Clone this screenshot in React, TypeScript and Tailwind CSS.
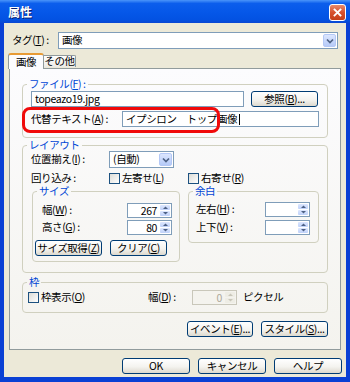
import React from "react";

const Mn: React.FC<{ c: string }> = ({ c }) => (
  <span className="underline underline-offset-[1px] decoration-[0.5px]">{c}</span>
);

const XpButton: React.FC<{ className?: string; children: React.ReactNode }> = ({ className = "", children }) => (
  <div
    className={`h-[16px] flex items-center justify-center rounded-[3px] border border-[#003C74] bg-[linear-gradient(#FFFFFF,#F4F3EF_55%,#DDD9CE)] leading-none text-black ${className}`}
  >
    {children}
  </div>
);

const DropArrow = () => (
  <div className="w-[13px] h-[13px] mr-px rounded-[2px] border border-[#B4C8F6] bg-[linear-gradient(#DCE6FE,#B5CAF8)] flex items-center justify-center">
    <svg width="8" height="6" viewBox="0 0 8 6">
      <path d="M1 1.5 L4 4.5 L7 1.5" stroke="#4D6185" strokeWidth="1.7" fill="none" />
    </svg>
  </div>
);

const Select: React.FC<{ className?: string; value: string }> = ({ className = "", value }) => (
  <div className={`h-[17px] flex items-center border border-[#7F9DB9] bg-white ${className}`}>
    <span className="flex-1 pl-[3px] leading-none">{value}</span>
    <DropArrow />
  </div>
);

const Input: React.FC<{ className?: string; children?: React.ReactNode }> = ({ className = "", children }) => (
  <div className={`h-[16px] flex items-center border border-[#7F9DB9] bg-white pl-[3px] leading-none ${className}`}>
    {children}
  </div>
);

const Check: React.FC<{ label: React.ReactNode; className?: string }> = ({ label, className = "" }) => (
  <div className={`flex items-center ${className}`}>
    <span className="w-[11px] h-[11px] border border-[#1C5180] bg-[linear-gradient(135deg,#DCDCD7,#FFFFFF)] mr-[2px]" />
    <span className="leading-none">{label}</span>
  </div>
);

const SpinBtn: React.FC<{ up?: boolean; disabled?: boolean }> = ({ up, disabled }) => (
  <div
    className={`flex-1 rounded-[1px] flex items-center justify-center ${
      disabled ? "bg-[#EEEDE5]" : "bg-[linear-gradient(#DDE7FE,#BFD1F9)]"
    }`}
  >
    <svg width="5" height="3" viewBox="0 0 5 3">
      <path
        d={up ? "M0 3 L2.5 0.5 L5 3 Z" : "M0 0 L2.5 2.5 L5 0 Z"}
        fill={disabled ? "#C9C7BA" : "#4D6185"}
      />
    </svg>
  </div>
);

const Spin: React.FC<{ value?: string; disabled?: boolean }> = ({ value = "", disabled }) => (
  <div
    className={`w-[45px] h-[15px] flex border ${
      disabled ? "border-[#C9C7BA] bg-[#F4F3EE] text-[#ACA899]" : "border-[#7F9DB9] bg-white"
    }`}
  >
    <span className="flex-1 text-right pr-[2px] leading-[13px]">{value}</span>
    <div className="w-[12px] flex flex-col gap-px p-px">
      <SpinBtn up disabled={disabled} />
      <SpinBtn disabled={disabled} />
    </div>
  </div>
);

const Group: React.FC<{ label: React.ReactNode; className?: string; children: React.ReactNode }> = ({
  label,
  className = "",
  children,
}) => (
  <fieldset className={`border border-[#D0D0BF] rounded-[4px] ${className}`}>
    <legend className="ml-[4px] px-[2px] text-[#0046D5] leading-[12px]">{label}</legend>
    {children}
  </fieldset>
);

export default function App() {
  return (
    <div className="w-[350px] h-[382px] bg-[#0A40D4] flex flex-col font-['Noto_Sans_CJK_JP',sans-serif] text-[10.5px] tracking-[-0.4px] whitespace-nowrap text-black overflow-hidden select-none">
      {/* title bar */}
      <div className="h-[23px] shrink-0 flex justify-between pl-[8px] pr-[4px] bg-[linear-gradient(#4A95FA,#0C5EEC_15%,#0557E8_55%,#0352E2_85%,#0A47D2)]">
        <span className="self-center text-white font-bold text-[12px] tracking-normal [text-shadow:1px_1px_#0A1E6E]">属性</span>
        <div className="mt-[4px] w-[17px] h-[17px] rounded-[3px] border border-white bg-[linear-gradient(#E88B6C,#D6512E_50%,#C4401A)] flex items-center justify-center">
          <svg width="9" height="9" viewBox="0 0 9 9">
            <path d="M1.5 1.5L7.5 7.5M7.5 1.5L1.5 7.5" stroke="white" strokeWidth="1.8" strokeLinecap="square" />
          </svg>
        </div>
      </div>

      <div className="flex-1 mx-[4px] mb-[5px] bg-[#ECE9D8] flex flex-col">
        {/* tag */}
        <div className="mt-[9px] flex items-center h-[17px]">
          <span className="ml-[8px] w-[46px] leading-none">
            タグ(<Mn c="T" />) :
          </span>
          <Select className="w-[280px]" value="画像" />
        </div>

        {/* tabs */}
        <div className="mt-[4px] flex items-end pl-[4px] relative z-10">
          <div className="w-[36px] h-[16px] -mb-px bg-[#FCFCFE] border-x border-[#919B9C] border-t-2 border-t-[#E89B35] rounded-t-[3px] flex items-center justify-center leading-none">
            画像
          </div>
          <div className="w-[32px] h-[12px] mb-px bg-[linear-gradient(#FFFFFF,#ECEBE6)] border-r border-t border-[#919B9C] rounded-tr-[2px] flex items-center justify-center leading-none">
            その他
          </div>
        </div>

        {/* panel */}
        <div className="ml-[5px] w-[332px] h-[282px] shrink-0 border border-[#919B9C] bg-[linear-gradient(#FCFCFE,#F4F3EE)] px-[12px] flex flex-col">
          <Group label={<>ファイル(<Mn c="F" />) :</>} className="mt-[9px] pb-[10px]">
            <div className="mt-px flex items-center pl-[8px] gap-[7px]">
              <Input className="w-[213px]">topeazo19.jpg</Input>
              <XpButton className="w-[67px]">
                参照(<Mn c="B" />)...
              </XpButton>
            </div>
            <div className="mt-[4px] relative flex items-center pl-[8px]">
              <span className="w-[91px] leading-none">
                代替テキスト(<Mn c="A" />) :
              </span>
              <Input className="w-[197px]">
                <span>イプシロン　トップ画像</span>
                <span className="ml-[2px] w-px h-[11px] bg-black" />
              </Input>
              <div className="absolute left-[-1px] top-[-4px] w-[198px] h-[26px] border-[3px] border-[#F00A0A] rounded-[8px]" />
            </div>
          </Group>

          <Group label="レイアウト" className="mt-px pb-[10px]">
            <div className="h-[17px] flex items-center pl-[8px]">
              <span className="w-[78px] leading-none">
                位置揃え(<Mn c="I" />) :
              </span>
              <Select className="w-[65px]" value="(自動)" />
            </div>
            <div className="mt-[4px] h-[12px] flex items-center pl-[8px]">
              <span className="w-[78px] leading-none">回り込み :</span>
              <Check className="w-[79px]" label={<>左寄せ(<Mn c="L" />)</>} />
              <Check label={<>右寄せ(<Mn c="R" />)</>} />
            </div>
            <div className="mt-px flex items-start pl-[9px] gap-[8px]">
              <Group label="サイズ" className="w-[148px] pb-[5px]">
                <div className="mt-[6px] flex items-center pl-[9px]">
                  <span className="w-[85px] leading-none">
                    幅(<Mn c="W" />) :
                  </span>
                  <Spin value="267" />
                </div>
                <div className="mt-[2px] flex items-center pl-[9px]">
                  <span className="w-[85px] leading-none">
                    高さ(<Mn c="G" />) :
                  </span>
                  <Spin value="80" />
                </div>
                <div className="mt-[5px] flex pl-[2px] gap-[8px]">
                  <XpButton className="w-[67px]">
                    サイズ取得(<Mn c="Z" />)
                  </XpButton>
                  <XpButton className="w-[57px]">
                    クリア(<Mn c="C" />)
                  </XpButton>
                </div>
              </Group>
              <Group label="余白" className="w-[131px] pb-[7px]">
                <div className="mt-[5px] flex items-center pl-[7px]">
                  <span className="w-[69px] leading-none">
                    左右(<Mn c="H" />) :
                  </span>
                  <Spin />
                </div>
                <div className="mt-[3px] flex items-center pl-[7px]">
                  <span className="w-[69px] leading-none">
                    上下(<Mn c="V" />) :
                  </span>
                  <Spin />
                </div>
              </Group>
            </div>
          </Group>

          <Group label="枠" className="mt-[3px] pb-[7px]">
            <div className="mt-[2px] h-[15px] flex items-center">
              <Check className="ml-[5px] w-[120px]" label={<>枠表示(<Mn c="O" />)</>} />
              <span className="w-[44px] leading-none">
                幅(<Mn c="D" />) :
              </span>
              <Spin value="0" disabled />
              <span className="ml-[6px] leading-none">ピクセル</span>
            </div>
          </Group>

          <div className="mt-[8px] flex justify-end gap-[8px]">
            <XpButton className="w-[66px]">
              イベント(<Mn c="E" />)...
            </XpButton>
            <XpButton className="w-[67px]">
              スタイル(<Mn c="S" />)...
            </XpButton>
          </div>
        </div>

        {/* dialog buttons */}
        <div className="mt-[8px] flex gap-[8px] pl-[118px]">
          <XpButton className="w-[68px]">OK</XpButton>
          <XpButton className="w-[68px]">キャンセル</XpButton>
          <XpButton className="w-[68px]">ヘルプ</XpButton>
        </div>
      </div>
    </div>
  );
}
